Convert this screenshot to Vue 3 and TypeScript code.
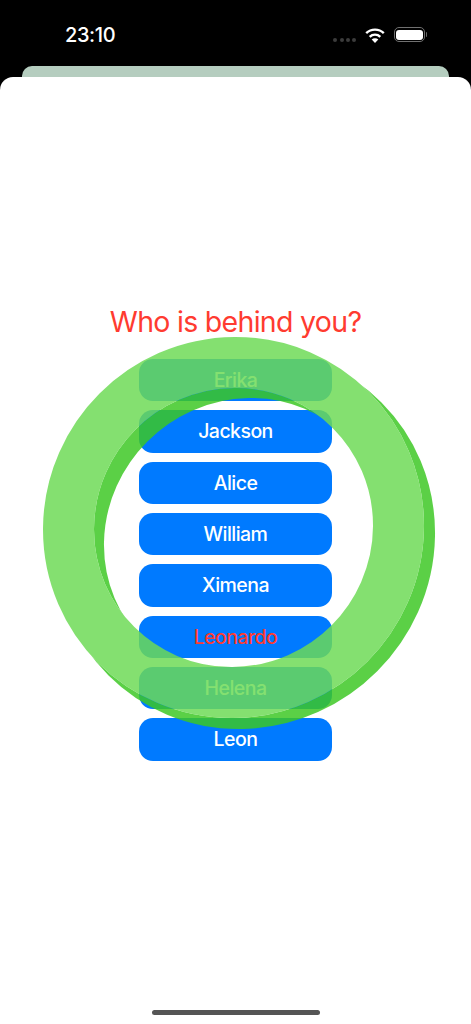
<script setup lang="ts">
const names: { label: string; danger?: boolean }[] = [
  { label: 'Erika' },
  { label: 'Jackson' },
  { label: 'Alice' },
  { label: 'William' },
  { label: 'Ximena' },
  { label: 'Leonardo', danger: true },
  { label: 'Helena' },
  { label: 'Leon' },
]
</script>

<template>
  <div class="screen">
    <header class="status">
      <span class="time">23:10</span>
      <div class="status-icons">
        <div class="signal"><i></i><i></i><i></i><i></i></div>
        <svg class="wifi" width="20" height="15" viewBox="0 0 20 15" aria-hidden="true">
          <path d="M1.2 5.2A12.6 12.6 0 0 1 18.8 5.2" fill="none" stroke="#fff" stroke-width="2.4" />
          <path d="M4.7 8.8A7.6 7.6 0 0 1 15.3 8.8" fill="none" stroke="#fff" stroke-width="2.4" />
          <path d="M10 15L6.7 11.6A4.7 4.7 0 0 1 13.3 11.6Z" fill="#fff" />
        </svg>
        <div class="battery">
          <div class="battery-body"><div class="battery-fill"></div></div>
          <div class="battery-cap"></div>
        </div>
      </div>
    </header>
    <div class="back-sheet"></div>
    <main class="card">
      <h1 class="title">Who is behind you?</h1>
      <div class="list">
        <button v-for="n in names" :key="n.label" class="name" :class="{ danger: n.danger }">
          {{ n.label }}
        </button>
      </div>
      <svg class="rings" viewBox="0 77 471 947" aria-hidden="true">
        <defs>
          <mask id="outside-front" maskUnits="userSpaceOnUse" x="0" y="77" width="471" height="947">
            <rect x="0" y="77" width="471" height="947" fill="#fff" />
            <ellipse cx="233.5" cy="527.5" rx="164" ry="166" transform="rotate(45 233.5 527.5)" fill="none" stroke="#000" stroke-width="51" />
          </mask>
        </defs>
        <g mask="url(#outside-front)">
          <ellipse cx="245" cy="539" rx="162.5" ry="168.5" transform="rotate(45 245 539)" fill="none" stroke="#3cc723" stroke-opacity="0.84" stroke-width="49" />
        </g>
        <ellipse cx="233.5" cy="527.5" rx="164" ry="166" transform="rotate(45 233.5 527.5)" fill="none" stroke="#6cda55" stroke-opacity="0.84" stroke-width="51" />
      </svg>
      <div class="home-indicator"></div>
    </main>
  </div>
</template>

<style>
html,
body {
  margin: 0;
  background: #000;
}
</style>

<style scoped>
.screen {
  width: 471px;
  height: 1024px;
  background: #000;
  display: flex;
  flex-direction: column;
  overflow: hidden;
  font-family: Inter, "Liberation Sans", sans-serif;
}
.status {
  height: 66px;
  flex: none;
  display: flex;
  justify-content: space-between;
  padding: 0 44px 0 65px;
  box-sizing: border-box;
  color: #fff;
}
.time {
  margin-top: 23px;
  font-size: 20px;
  line-height: 24px;
  font-weight: 500;
  letter-spacing: -0.4px;
}
.status-icons {
  display: flex;
  align-items: flex-start;
  margin-top: 27px;
}
.signal {
  display: flex;
  gap: 2.3px;
  margin-top: 11px;
  margin-right: 9px;
}
.signal i {
  width: 4px;
  height: 4px;
  border-radius: 50%;
  background: #3c3c3c;
}
.wifi {
  margin-right: 8.5px;
  margin-top: 1px;
}
.battery {
  display: flex;
  align-items: center;
}
.battery-body {
  border: 1.2px solid #707070;
  border-radius: 5px;
  padding: 1.5px;
  width: 26.3px;
  height: 10px;
  box-sizing: content-box;
}
.battery-fill {
  width: 100%;
  height: 100%;
  background: #fff;
  border-radius: 3px;
}
.battery-cap {
  width: 1.5px;
  height: 5px;
  margin-left: 0.5px;
  background: #6a6a6a;
  border-radius: 0 2px 2px 0;
}
.back-sheet {
  flex: none;
  height: 22px;
  margin: 0 22px -11px;
  background: #b5cdbf;
  border-radius: 10px 10px 0 0;
}
.card {
  position: relative;
  flex: 1;
  background: #fff;
  border-radius: 13px 13px 0 0;
  display: flex;
  flex-direction: column;
  align-items: center;
  padding-top: 226px;
}
.title {
  margin: 0;
  font-size: 28.5px;
  line-height: 38px;
  font-weight: 400;
  letter-spacing: -0.7px;
  color: #ff3b30;
  white-space: nowrap;
}
.list {
  margin-top: 18px;
  display: flex;
  flex-direction: column;
  gap: 9px;
}
.name {
  width: 192.5px;
  height: 42.33px;
  padding: 0;
  border: 0;
  border-radius: 14px;
  background: #007aff;
  color: #fff;
  font-family: inherit;
  font-size: 19.5px;
  font-weight: 500;
  letter-spacing: -0.55px;
}
.name.danger {
  color: #ff3b30;
}
.rings {
  position: absolute;
  left: 0;
  top: 0;
  width: 471px;
  height: 947px;
  pointer-events: none;
}
.home-indicator {
  position: absolute;
  left: 152px;
  top: 933px;
  width: 168px;
  height: 5px;
  border-radius: 3px;
  background: #555;
}
</style>
